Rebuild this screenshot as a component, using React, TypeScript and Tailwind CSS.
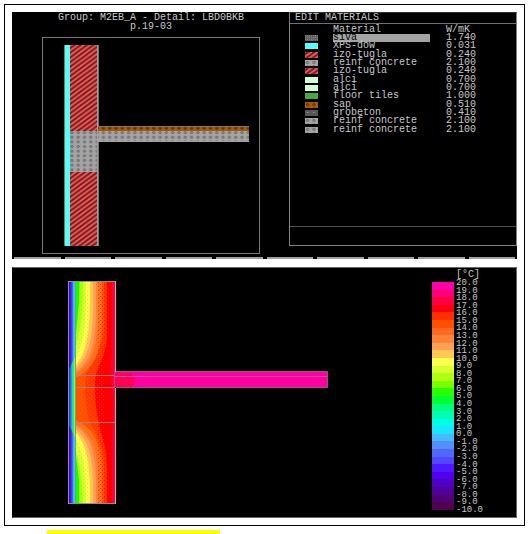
import clsx from "clsx";

type Material = {
  name: string;
  conductivity: string;
  fill: string;
};

const materials: Material[] = [
  { name: "siva", conductivity: "1.740", fill: "url(#plaster)" },
  { name: "XPS-dow", conductivity: "0.031", fill: "#50ffff" },
  { name: "izo-tugla", conductivity: "0.240", fill: "url(#brick)" },
  { name: "reinf concrete", conductivity: "2.100", fill: "url(#concrete)" },
  { name: "izo-tugla", conductivity: "0.240", fill: "url(#brick)" },
  { name: "alci", conductivity: "0.700", fill: "#d4ffd4" },
  { name: "alci", conductivity: "0.700", fill: "#d4ffd4" },
  { name: "floor tiles", conductivity: "1.000", fill: "#48a848" },
  { name: "sap", conductivity: "0.510", fill: "url(#screed)" },
  { name: "grobeton", conductivity: "0.410", fill: "url(#lean)" },
  { name: "reinf concrete", conductivity: "2.100", fill: "url(#concrete)" },
  { name: "reinf concrete", conductivity: "2.100", fill: "url(#concrete)" },
];

// 20 °C at the top down to -10 °C
const legendBands = [
  "#ff00a8", "#ff0078", "#ff0040", "#ff0010", "#ff3000", "#ff5000", "#ff6820", "#ff8438",
  "#ffa058", "#ffc850", "#ffff50", "#d8ff30", "#b0ff10", "#78ff00", "#28ff00",
  "#00ff30", "#00ff80", "#00ffb0", "#00ffe8", "#18e8ff", "#48b8ff", "#5090ff", "#5068ff",
  "#5048ff", "#5018ff", "#5000f0", "#5000c0", "#500098", "#500070", "#500050",
];
const temperatures = Array.from({ length: 31 }, (_, i) => (20 - i).toFixed(1));

// isotherms in the brick: x far from the slab, y where they meet the insulation
const isotherms = [
  { color: "#ff7020", x: 102, y: 378 },
  { color: "#ff8438", x: 98, y: 374 },
  { color: "#ffa058", x: 96, y: 372 },
  { color: "#ffc850", x: 93, y: 369 },
  { color: "#ffff50", x: 90, y: 366 },
  { color: "#d8ff30", x: 86, y: 360 },
  { color: "#a8ff10", x: 83, y: 350 },
  { color: "#60ff00", x: 80, y: 336 },
];

const upperIsotherm = (x: number, y: number) =>
  `M75 281H${x}V${y - 65}C${x} ${y - 30} ${x - 5} ${y - 10} 75 ${y}Z`;

const lowerIsotherm = (x: number, y: number) => {
  const end = 798 - y;
  return `M75 504H${x}V${end + 60}C${x} ${end + 28} ${x - 5} ${end + 9} 75 ${end}Z`;
};

function Patterns() {
  return (
    <svg className="absolute h-0 w-0" aria-hidden="true">
      <defs>
        <pattern id="brick" width="6.3" height="4.65" patternUnits="userSpaceOnUse">
          <rect width="6.3" height="4.65" fill="#b00000" />
          <path d="M-6.3 4.65L6.3 -4.65M0 4.65L6.3 0M0 9.3L12.6 0" stroke="#b07878" strokeWidth="1.8" />
        </pattern>
        <pattern id="concrete" width="6.3" height="4.65" patternUnits="userSpaceOnUse">
          <rect width="6.3" height="4.65" fill="#a4a4a4" />
          <ellipse cx="2.6" cy="2.4" rx="1.4" ry="1" fill="#8c8c8c" stroke="#606060" strokeWidth="0.8" />
        </pattern>
        <pattern id="screed" width="6.3" height="4.65" patternUnits="userSpaceOnUse">
          <rect width="6.3" height="4.65" fill="#b05800" />
          <ellipse cx="2.6" cy="2.6" rx="1.3" ry="1" fill="none" stroke="#402000" strokeWidth="0.9" />
        </pattern>
        <pattern id="lean" width="6.3" height="4.65" patternUnits="userSpaceOnUse">
          <rect width="6.3" height="4.65" fill="#585858" />
          <ellipse cx="2.6" cy="2.4" rx="1.3" ry="1" fill="#b0b0b0" stroke="#303030" strokeWidth="0.6" />
        </pattern>
        <pattern id="plaster" width="2" height="2" patternUnits="userSpaceOnUse">
          <rect width="2" height="2" fill="#606060" />
          <rect width="1" height="1" fill="#808080" />
        </pattern>
        <pattern id="dither" width="4" height="4" patternUnits="userSpaceOnUse">
          <rect width="1" height="1" fill="#ff0000" />
          <rect x="2" y="2" width="1" height="1" fill="#ff0000" />
        </pattern>
        <pattern id="grain" width="4" height="4" patternUnits="userSpaceOnUse">
          <rect x="1" y="1" width="1" height="1" fill="#ff9000" />
          <rect x="3" y="3" width="1" height="1" fill="#ff9000" />
        </pattern>
      </defs>
    </svg>
  );
}

function SectionDrawing() {
  return (
    <svg viewBox="43 38 216 215" className="block h-auto w-full" role="img" aria-label="Wall section">
      <rect x="64" y="45" width="1" height="201" fill="#887840" />
      <rect x="65" y="45" width="5" height="201" fill="#50ffff" />
      <rect x="70" y="45" width="27" height="86" fill="url(#brick)" />
      <rect x="70" y="131" width="28" height="41" fill="url(#concrete)" />
      <rect x="70" y="172" width="27" height="74" fill="url(#brick)" />
      <rect x="97" y="45" width="1" height="201" fill="#a0a0a0" />
      <rect x="98" y="45" width="1" height="201" fill="#707070" />
      <rect x="98" y="126" width="151" height="1" fill="#787878" />
      <rect x="98" y="127" width="151" height="4" fill="url(#screed)" />
      <rect x="98" y="131" width="151" height="10" fill="url(#concrete)" />
      <rect x="98" y="141" width="151" height="1" fill="#a4a4a4" />
    </svg>
  );
}

function ThermalDrawing() {
  return (
    <svg viewBox="68 281 260 223" className="block h-auto w-full" role="img" aria-label="Temperature distribution">
      <defs>
        <linearGradient id="cold" x1="0" x2="1">
          <stop offset="0" stopColor="#5000a0" />
          <stop offset="0.25" stopColor="#4810ff" />
          <stop offset="0.5" stopColor="#4860ff" />
          <stop offset="0.68" stopColor="#20d0ff" />
          <stop offset="0.85" stopColor="#00ff90" />
          <stop offset="1" stopColor="#20ff00" />
        </linearGradient>
        <linearGradient id="bridge" x1="0" x2="1">
          <stop offset="0" stopColor="#5018ff" />
          <stop offset="0.28" stopColor="#4060ff" />
          <stop offset="0.45" stopColor="#00e0e0" />
          <stop offset="0.62" stopColor="#00ff40" />
          <stop offset="0.82" stopColor="#b0ff20" />
          <stop offset="1" stopColor="#ffb040" />
        </linearGradient>
      </defs>

      <rect x="115" y="372" width="212" height="15" fill="#ff00a0" />
      <path d="M115 373H131Q137 379 133 387H115Z" fill="#ff0060" />
      <path d="M115 373H131Q137 379 133 387H115Z" fill="url(#dither)" />

      <rect x="75" y="281" width="40" height="223" fill="#ff0000" />
      <path d="M115 281H112V350Q110 370 112 385T112 440V504H115Z" fill="#ff0040" />
      <path d="M75 281H107V335C107 355 97 366 95 380C94 395 96 410 99 425C103 440 107 450 107 470V504H75Z" fill="#ff3800" />
      <path d="M75 281H104V325C104 350 90 362 86 375C84 390 86 405 89 420C96 435 104 445 104 470V504H75Z" fill="#ff5000" />
      {isotherms.map(({ color, x, y }) => (
        <g key={color} fill={color}>
          <path d={upperIsotherm(x, y)} />
          <path d={lowerIsotherm(x, y)} />
        </g>
      ))}
      <path d="M76 281H79V300L76 335ZM76 504H79V480L76 455Z" fill="#10ff00" />
      <rect x="98" y="281" width="16" height="223" fill="url(#dither)" opacity="0.6" />
      <rect x="78" y="281" width="26" height="223" fill="url(#grain)" opacity="0.25" />

      <rect x="69" y="281" width="7" height="223" fill="url(#cold)" />
      <path d="M69 369L76 355V440L69 425Z" fill="url(#bridge)" />

      <g fill="none" stroke="#909090" strokeWidth="1">
        <path d="M68.5 281V504M75.5 281V504M68 281.5H116M68 503.5H116" />
        <path d="M76 375.5H115M76 387.5H115M76 422.5H115" strokeOpacity="0.8" />
        <path d="M114.5 371V388M116 371.5H327.5V387.5H116" stroke="#a05080" />
        <path d="M115 376.5H327" stroke="#d84ca0" />
      </g>
      <rect x="115" y="281" width="1" height="91" fill="#b0b0b0" />
      <rect x="115" y="388" width="1" height="116" fill="#b0b0b0" />
    </svg>
  );
}

function MaterialsPanel() {
  return (
    <section className="flex h-[234px] w-[228px] shrink-0 flex-col border border-[#808080] border-t-[#303030]">
      <h2 className="h-[11px] border-b border-[#707070] px-[5px] leading-[10px]">EDIT MATERIALS</h2>
      <div className="flex-1">
        <table className="mt-[2px] h-[108px] w-full table-fixed border-collapse text-left leading-[8px]">
          <thead>
            <tr>
              <th className="w-[43px] p-0" />
              <th className="w-[113px] p-0 font-normal">Material</th>
              <th className="p-0 font-normal">W/mK</th>
            </tr>
          </thead>
          <tbody>
            {materials.map((material, idx) => (
              <tr key={idx}>
                <td className="py-0 pr-0 pl-[15px]">
                  <svg viewBox="0 0 13 6" className="block h-[6px] w-[13px]">
                    <rect width="13" height="6" fill={material.fill} />
                  </svg>
                </td>
                <td className="p-0">
                  <span
                    className={clsx(
                      "block h-[8px] w-[97px] whitespace-nowrap",
                      idx === 0 && "bg-[#a4a4a4] text-black"
                    )}
                  >
                    {material.name}
                  </span>
                </td>
                <td className="p-0">{material.conductivity}</td>
              </tr>
            ))}
          </tbody>
        </table>
      </div>
      <div className="h-[19px] border-t border-[#505050]" />
    </section>
  );
}

function Legend() {
  return (
    <div className="w-[84px] shrink-0 pt-[3px]">
      <div className="pl-6 leading-[8px]">[°C]</div>
      <div className="flex gap-[2px]">
        <div className="mt-[3px] flex h-[228px] w-[22px] flex-col">
          {legendBands.map((color) => (
            <div key={color} className="flex-1" style={{ backgroundColor: color }} />
          ))}
        </div>
        <ul className="mt-px flex h-[234px] flex-col justify-between text-[9px] leading-[7px]">
          {temperatures.map((temperature) => (
            <li key={temperature}>{temperature}</li>
          ))}
        </ul>
      </div>
    </div>
  );
}

export default function App() {
  return (
    <div className="bg-white pt-1 pr-[6px] pl-1 font-['Liberation_Mono',monospace] text-[10px] text-[#c8c8c8]">
      <Patterns />
      <main className="flex flex-col gap-2 border border-black p-[7px]">
        <div className="bg-black">
          <div className="flex">
            <section className="min-w-0 flex-1 pr-[29px] pl-[30px]">
              <h1 className="flex h-[25px] flex-col items-center pt-px leading-[9px] whitespace-nowrap">
                <span>Group: M2EB_A - Detail: LBD0BKB</span>
                <span>p.19-03</span>
              </h1>
              <div className="border border-[#787878]">
                <SectionDrawing />
              </div>
            </section>
            <MaterialsPanel />
          </div>
          <div className="mt-[3px] flex h-[2px] gap-1 px-[2px]">
            {Array.from({ length: 10 }, (_, i) => (
              <div key={i} className="flex-1 bg-[#a0a0a0]" />
            ))}
          </div>
        </div>

        <div className="flex justify-between border border-[#686868] border-l-black bg-black pb-[3px] pl-[55px]">
          <div className="max-w-[260px] min-w-0 flex-1 pt-[13px]">
            <ThermalDrawing />
          </div>
          <Legend />
        </div>
      </main>
      <div className="mt-1 ml-[43px] h-1 w-[173px] bg-[#ffff00]" />
    </div>
  );
}
